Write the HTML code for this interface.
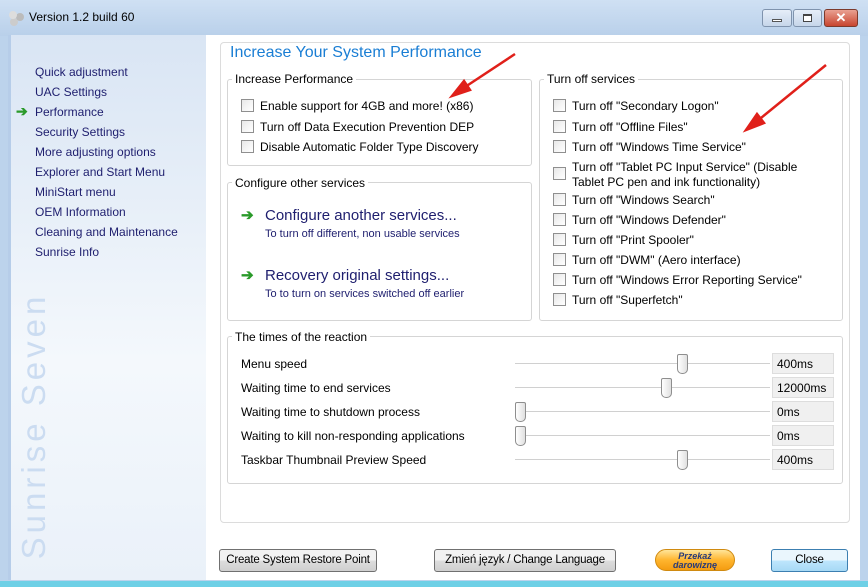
<!DOCTYPE html>
<html><head><meta charset="utf-8"><style>
*{box-sizing:border-box;margin:0;padding:0}
body{width:868px;height:587px;overflow:hidden;font-family:"Liberation Sans",sans-serif;font-size:12px;color:#000;background:#bcd3ec;position:relative}
.abs{position:absolute}
.title{left:0;top:0;width:868px;height:36px;background:linear-gradient(#cfe0f3,#b9d0ea)}
.left{left:8px;top:35px;width:198px;height:545px;background:linear-gradient(#d9e5f4,#f4f8fc 60%,#eaf1f9);border-left:3px solid #b6cde9}
.main{left:206px;top:35px;width:654px;height:545px;background:#fff}
.nav{left:35px;font-size:12px;color:#1e1e6e}
.panel{left:220px;top:42px;width:630px;height:481px;border:1px solid #dcdcdc;border-radius:4px}
.grp{border:1px solid #d5d5d5;border-radius:3px;background:#fff}
.gt{background:#fff;padding:0 3px;font-size:12px}
.cb{width:13px;height:13px;border:1px solid #8f8f8f;background:linear-gradient(135deg,#e8e8e8,#fff)}
.btn{border:1px solid #707070;border-radius:3px;background:linear-gradient(#f2f2f2 50%,#dddddd 50%,#cfcfcf);text-align:center;line-height:21px;font-size:11.5px;letter-spacing:-0.2px}
.trk{left:515px;width:255px;height:2px;background:#d0d0d0;border-bottom:1px solid #fff}
.th{width:11px;height:20px;border:1px solid #8e8e8e;border-radius:2px 2px 5px 5px;background:linear-gradient(90deg,#fff,#e0e0e0)}
.tb{left:772px;width:62px;height:21px;background:#f0f0f0;border:1px solid #ddd;padding:3px 4px;font-size:12px}
</style></head><body>
<div class="abs title"></div>
<div class="abs" style="left:9px;top:11px;width:8px;height:8px;border-radius:50%;background:#ddd;box-shadow:7px 2px 0 #bbb,1px 7px 0 #ccc"></div>
<div class="abs" style="left:29px;top:10px;font-size:12px">Version 1.2 build 60</div>
<div class="abs" style="left:762px;top:9px;width:30px;height:18px;border:1px solid #7f93ad;border-radius:3px;background:linear-gradient(#e6eef8,#c6d6ea)"><div style="margin:9px auto 0;width:10px;height:3px;background:#fff;border:1px solid #555"></div></div>
<div class="abs" style="left:793px;top:9px;width:29px;height:18px;border:1px solid #7f93ad;border-radius:3px;background:linear-gradient(#e6eef8,#c6d6ea)"><div style="margin:4px auto 0;width:9px;height:8px;border:1px solid #444;border-top-width:2px;background:#fff"></div></div>
<div class="abs" style="left:824px;top:9px;width:34px;height:18px;border:1px solid #7c3a2c;border-radius:3px;background:linear-gradient(#e9a192,#c8452f);color:#fff;font-weight:bold;text-align:center;line-height:16px;font-size:13px">✕</div>
<div class="abs left"></div>
<div class="abs main"></div>
<div class="abs nav" style="top:65px">Quick adjustment</div>
<div class="abs nav" style="top:85px">UAC Settings</div>
<div class="abs" style="left:16px;top:103px;color:#2a9a2a;font-size:14px;font-weight:bold">➔</div>
<div class="abs nav" style="top:105px">Performance</div>
<div class="abs nav" style="top:125px">Security Settings</div>
<div class="abs nav" style="top:145px">More adjusting options</div>
<div class="abs nav" style="top:165px">Explorer and Start Menu</div>
<div class="abs nav" style="top:185px">MiniStart menu</div>
<div class="abs nav" style="top:205px">OEM Information</div>
<div class="abs nav" style="top:225px">Cleaning and Maintenance</div>
<div class="abs nav" style="top:245px">Sunrise Info</div>
<div class="abs" style="left:-116px;top:407px;width:300px;transform:rotate(-90deg);font-size:33px;color:#cbdcf1;letter-spacing:4px;text-align:center">Sunrise Seven</div>

<div class="abs panel"></div>
<div class="abs" style="left:227px;top:44px;background:#fff;padding:0 3px;font-size:16px;color:#1a7ed4">Increase Your System Performance</div>

<div class="abs grp" style="left:227px;top:79px;width:305px;height:87px"></div>
<div class="abs gt" style="left:232px;top:72px">Increase Performance</div>
<div class="abs cb" style="left:241px;top:99px"></div><div class="abs" style="left:260px;top:99px">Enable support for 4GB and more! (x86)</div>
<div class="abs cb" style="left:241px;top:120px"></div><div class="abs" style="left:260px;top:120px">Turn off Data Execution Prevention DEP</div>
<div class="abs cb" style="left:241px;top:140px"></div><div class="abs" style="left:260px;top:140px">Disable Automatic Folder Type Discovery</div>

<div class="abs grp" style="left:227px;top:182px;width:305px;height:139px"></div>
<div class="abs gt" style="left:232px;top:176px">Configure other services</div>
<div class="abs" style="left:241px;top:206px;color:#2a9a2a;font-size:15px;font-weight:bold">➔</div>
<div class="abs" style="left:265px;top:207px;font-size:15px;color:#1e1e6e">Configure another services...</div>
<div class="abs" style="left:265px;top:228px;font-size:11px;color:#1e1e6e">To turn off different, non usable services</div>
<div class="abs" style="left:241px;top:266px;color:#2a9a2a;font-size:15px;font-weight:bold">➔</div>
<div class="abs" style="left:265px;top:267px;font-size:15px;color:#1e1e6e">Recovery original settings...</div>
<div class="abs" style="left:265px;top:288px;font-size:11px;color:#1e1e6e">To to turn on services switched off earlier</div>

<div class="abs grp" style="left:539px;top:79px;width:304px;height:242px"></div>
<div class="abs gt" style="left:544px;top:72px">Turn off services</div>
<div class="abs cb" style="left:553px;top:99px"></div><div class="abs" style="left:572px;top:99px">Turn off "Secondary Logon"</div>
<div class="abs cb" style="left:553px;top:120px"></div><div class="abs" style="left:572px;top:120px">Turn off "Offline Files"</div>
<div class="abs cb" style="left:553px;top:140px"></div><div class="abs" style="left:572px;top:140px">Turn off "Windows Time Service"</div>
<div class="abs cb" style="left:553px;top:167px"></div><div class="abs" style="left:572px;top:160px;width:260px;line-height:15px">Turn off "Tablet PC Input Service" (Disable Tablet PC pen and ink functionality)</div>
<div class="abs cb" style="left:553px;top:193px"></div><div class="abs" style="left:572px;top:193px">Turn off "Windows Search"</div>
<div class="abs cb" style="left:553px;top:213px"></div><div class="abs" style="left:572px;top:213px">Turn off "Windows Defender"</div>
<div class="abs cb" style="left:553px;top:233px"></div><div class="abs" style="left:572px;top:233px">Turn off "Print Spooler"</div>
<div class="abs cb" style="left:553px;top:253px"></div><div class="abs" style="left:572px;top:253px">Turn off "DWM" (Aero interface)</div>
<div class="abs cb" style="left:553px;top:273px"></div><div class="abs" style="left:572px;top:273px">Turn off "Windows Error Reporting Service"</div>
<div class="abs cb" style="left:553px;top:293px"></div><div class="abs" style="left:572px;top:293px">Turn off "Superfetch"</div>

<div class="abs grp" style="left:227px;top:336px;width:616px;height:148px"></div>
<div class="abs gt" style="left:232px;top:330px">The times of the reaction</div>
<div class="abs" style="left:241px;top:357px">Menu speed</div>
<div class="abs" style="left:241px;top:381px">Waiting time to end services</div>
<div class="abs" style="left:241px;top:405px">Waiting time to shutdown process</div>
<div class="abs" style="left:241px;top:429px">Waiting to kill non-responding applications</div>
<div class="abs" style="left:241px;top:453px">Taskbar Thumbnail Preview Speed</div>
<div class="abs trk" style="top:363px"></div><div class="abs th" style="left:677px;top:354px"></div><div class="abs tb" style="top:353px">400ms</div>
<div class="abs trk" style="top:387px"></div><div class="abs th" style="left:661px;top:378px"></div><div class="abs tb" style="top:377px">12000ms</div>
<div class="abs trk" style="top:411px"></div><div class="abs th" style="left:515px;top:402px"></div><div class="abs tb" style="top:401px">0ms</div>
<div class="abs trk" style="top:435px"></div><div class="abs th" style="left:515px;top:426px"></div><div class="abs tb" style="top:425px">0ms</div>
<div class="abs trk" style="top:459px"></div><div class="abs th" style="left:677px;top:450px"></div><div class="abs tb" style="top:449px">400ms</div>

<div class="abs btn" style="left:219px;top:549px;width:158px;height:23px">Create System Restore Point</div>
<div class="abs btn" style="left:434px;top:549px;width:182px;height:23px">Zmień język / Change Language</div>
<div class="abs" style="left:655px;top:549px;width:80px;height:22px;border:1px solid #d08a10;border-radius:11px;background:linear-gradient(#ffe59a,#ffb52e 50%,#f49c10);text-align:center;font-size:9px;line-height:9px;padding-top:2px;font-style:italic;font-weight:bold;color:#283a78">Przekaż<br>darowiznę</div>
<div class="abs btn" style="left:771px;top:549px;width:77px;height:23px;border-color:#3c7fb1;background:linear-gradient(#eaf6fd 50%,#bee6fd 50%,#a7d9f5)">Close</div>
<div class="abs" style="left:0;top:581px;width:868px;height:6px;background:#6ed0e6"></div>

<svg class="abs" style="left:0;top:0" width="868" height="587">
<g stroke="#e0201a" stroke-width="2.5" fill="#e0201a">
<line x1="515" y1="54" x2="462" y2="89"/><polygon points="452,96 464,81 470,90"/>
<line x1="826" y1="65" x2="756" y2="122"/><polygon points="746,130 757,114 764,123"/>
</g></svg>
</body></html>
